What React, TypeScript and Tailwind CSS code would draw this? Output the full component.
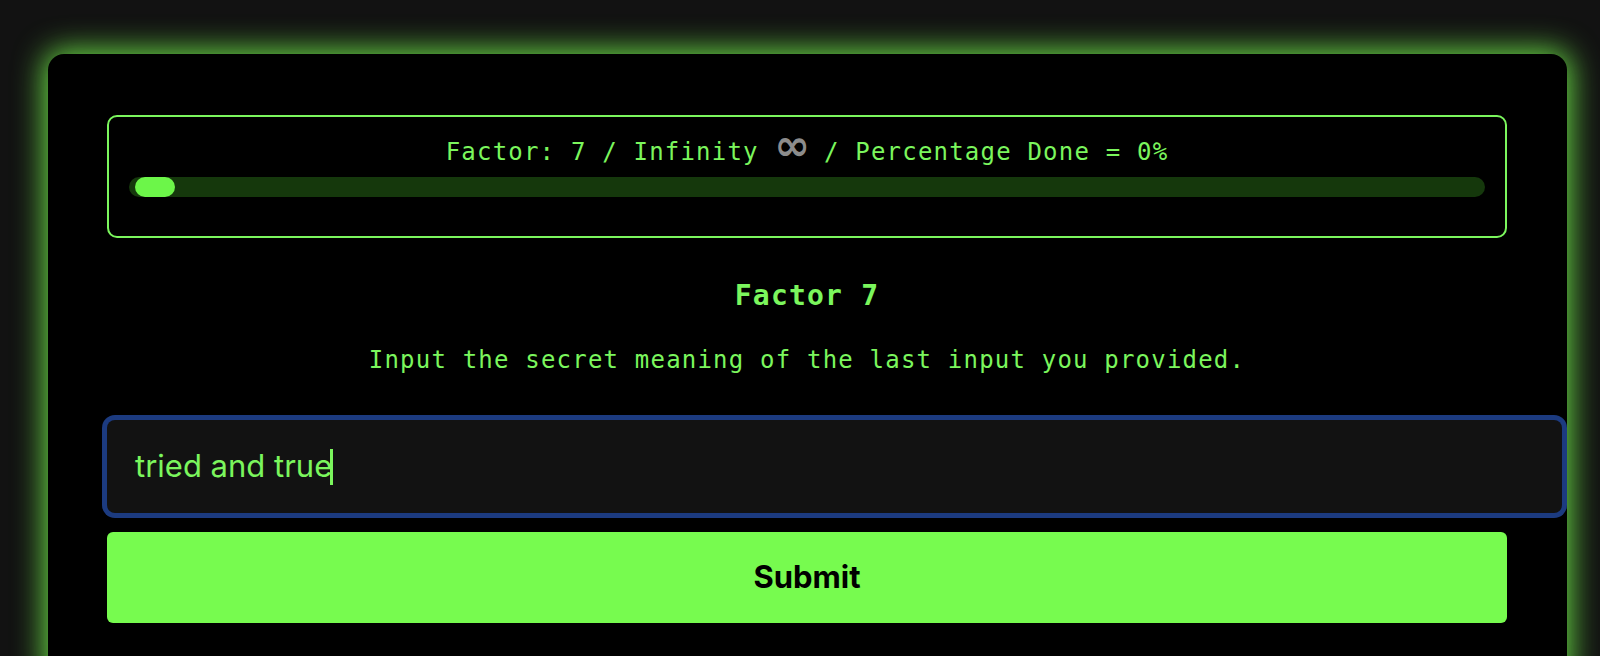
export default function App() {
  const factor = 7;
  const percent = 0;

  return (
    <div className="h-screen overflow-hidden bg-[#121212] pt-[54px] pl-[48px]">
      <div className="w-[1519px] rounded-2xl bg-black pl-[59px] pr-[60px] pt-[61px] pb-[60px] shadow-[0_0_30px_4px_rgba(119,252,78,0.85)]">
        {/* progress panel */}
        <div className="rounded-[10px] border-2 border-[#7bf65d] px-[20px] pt-[14px] pb-[39px]">
          <p className="text-center font-['DejaVu_Sans_Mono',monospace] text-[24px] leading-[28px] tracking-[1.2px] text-[#7bf65d] whitespace-pre">
            {`Factor: ${factor} / Infinity `}
            <span className="inline-block w-[34px] text-center font-['DejaVu_Sans',sans-serif] font-bold text-[43px] leading-[28px] tracking-normal text-[#8c8c8c]">∞</span>
            {` / Percentage Done = ${percent}%`}
          </p>
          <div className="mt-[11px] flex h-[20px] rounded-full bg-[#15380c]">
            <div className="ml-[6px] h-full w-[40px] rounded-full bg-[#6cf649]" />
          </div>
        </div>

        <h2 className="mt-[42px] text-center font-['DejaVu_Sans_Mono',monospace] text-[28px] font-bold leading-[32px] tracking-[1.2px] text-[#7bf65d]">
          Factor {factor}
        </h2>
        <p className="mt-[34px] text-center font-['DejaVu_Sans_Mono',monospace] text-[24px] leading-[28px] tracking-[1.2px] text-[#7bf65d]">
          Input the secret meaning of the last input you provided.
        </p>

        {/* answer field */}
        <div
          role="textbox"
          className="mt-[46px] flex h-[93px] w-[1455px] items-center rounded-[8px] bg-[#121212] pl-[28px] font-['Inter',sans-serif] text-[31px] text-[#7bf65d] shadow-[0_0_0_5px_#1c3b80]"
        >
          <span>tried and true</span>
          <span className="-ml-[2px] inline-block h-[36px] w-[3px] bg-[#7bf65d]" />
        </div>

        <button className="mt-[19px] flex h-[91px] w-full items-center justify-center rounded-[6px] bg-[#77fb4f] font-['Inter',sans-serif] text-[31px] font-bold text-black">
          Submit
        </button>
      </div>
    </div>
  );
}
